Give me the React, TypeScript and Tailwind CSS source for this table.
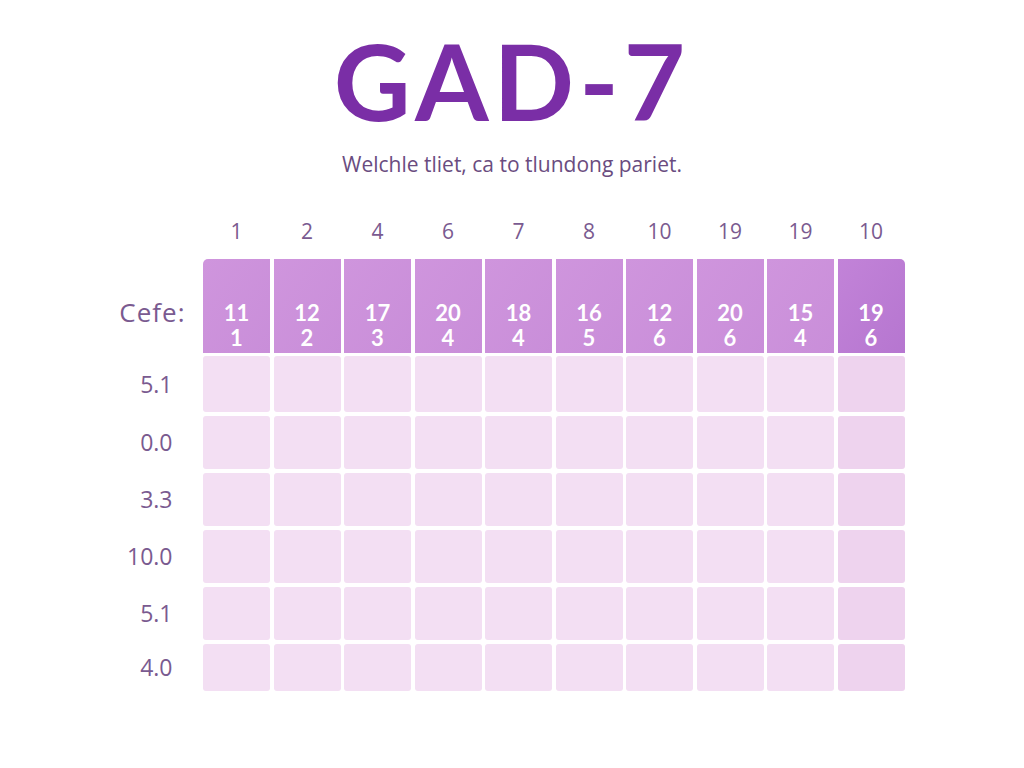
import React from "react";

const topNums = ["1", "2", "4", "6", "7", "8", "10", "19", "19", "10"];
const headCells = [
  ["11", "1"],
  ["12", "2"],
  ["17", "3"],
  ["20", "4"],
  ["18", "4"],
  ["16", "5"],
  ["12", "6"],
  ["20", "6"],
  ["15", "4"],
  ["19", "6"],
];
const rows = [
  { label: "5.1", h: "h-[56px]" },
  { label: "0.0", h: "h-[53px]" },
  { label: "3.3", h: "h-[53px]" },
  { label: "10.0", h: "h-[53px]" },
  { label: "5.1", h: "h-[53px]" },
  { label: "4.0", h: "h-[47px]" },
];

const rowGrid = "grid grid-cols-[100px_repeat(10,minmax(0,1fr))] gap-x-[3.5px]";
const soft = { fontFamily: "'Open Sans', 'Noto Sans', sans-serif" };
const lato = { fontFamily: "Lato, 'Noto Sans', sans-serif" };

export default function App() {
  return (
    <div className="w-[1024px] h-[768px] bg-white flex flex-col items-center" style={lato}>
      <h1 className="mt-[22px] text-[106px] leading-[116px] font-bold text-[#7a2ea6] tracking-[5px]">
        GAD-7
      </h1>
      <p className="mt-[12px] text-[21px] leading-[28px] text-[#6a4c80]" style={soft}>
        Welchle tliet, ca to tlundong pariet.
      </p>

      <div className="mt-[38px] w-[805px] ml-[-20px] flex flex-col" style={soft}>
        {/* column numbers */}
        <div className={`${rowGrid} h-[40px] items-center pb-[8px]`}>
          <div />
          {topNums.map((n, i) => (
            <div key={i} className="text-center text-[21px] text-[#7a5a90]">
              {n}
            </div>
          ))}
        </div>

        {/* header row */}
        <div className={`${rowGrid} mt-[3px] h-[94px]`}>
          <div className="flex items-center justify-end pr-[14px] pt-[12px] text-[26px] tracking-[1px] text-[#7a5a90]">
            Cefe:
          </div>
          {headCells.map(([a, b], i) => (
            <div
              key={i}
              style={lato}
              className={`flex flex-col items-center justify-end pb-[3px] text-white font-bold text-[22px] leading-[25px] ${
                i === 9
                  ? "bg-gradient-to-br from-[#c283d8] to-[#b676d0] rounded-tr-[5px]"
                  : "bg-gradient-to-br from-[#cf95dd] to-[#c98ed9]"
              } ${i === 0 ? "rounded-tl-[5px]" : ""}`}
            >
              <span>{a}</span>
              <span>{b}</span>
            </div>
          ))}
        </div>

        {/* body rows */}
        <div className="mt-[3px] flex flex-col gap-[4px]">
          {rows.map((r, ri) => (
            <div key={ri} className={`${rowGrid} ${r.h}`}>
              <div className="flex items-center justify-end pr-[27px] text-[23px] text-[#7a5a90]">
                {r.label}
              </div>
              {Array.from({ length: 10 }).map((_, ci) => (
                <div
                  key={ci}
                  className={`rounded-[3px] ${
                    ci === 9 ? "bg-[#eed3ee]" : "bg-[#f3dff3]"
                  }`}
                />
              ))}
            </div>
          ))}
        </div>
      </div>
    </div>
  );
}
